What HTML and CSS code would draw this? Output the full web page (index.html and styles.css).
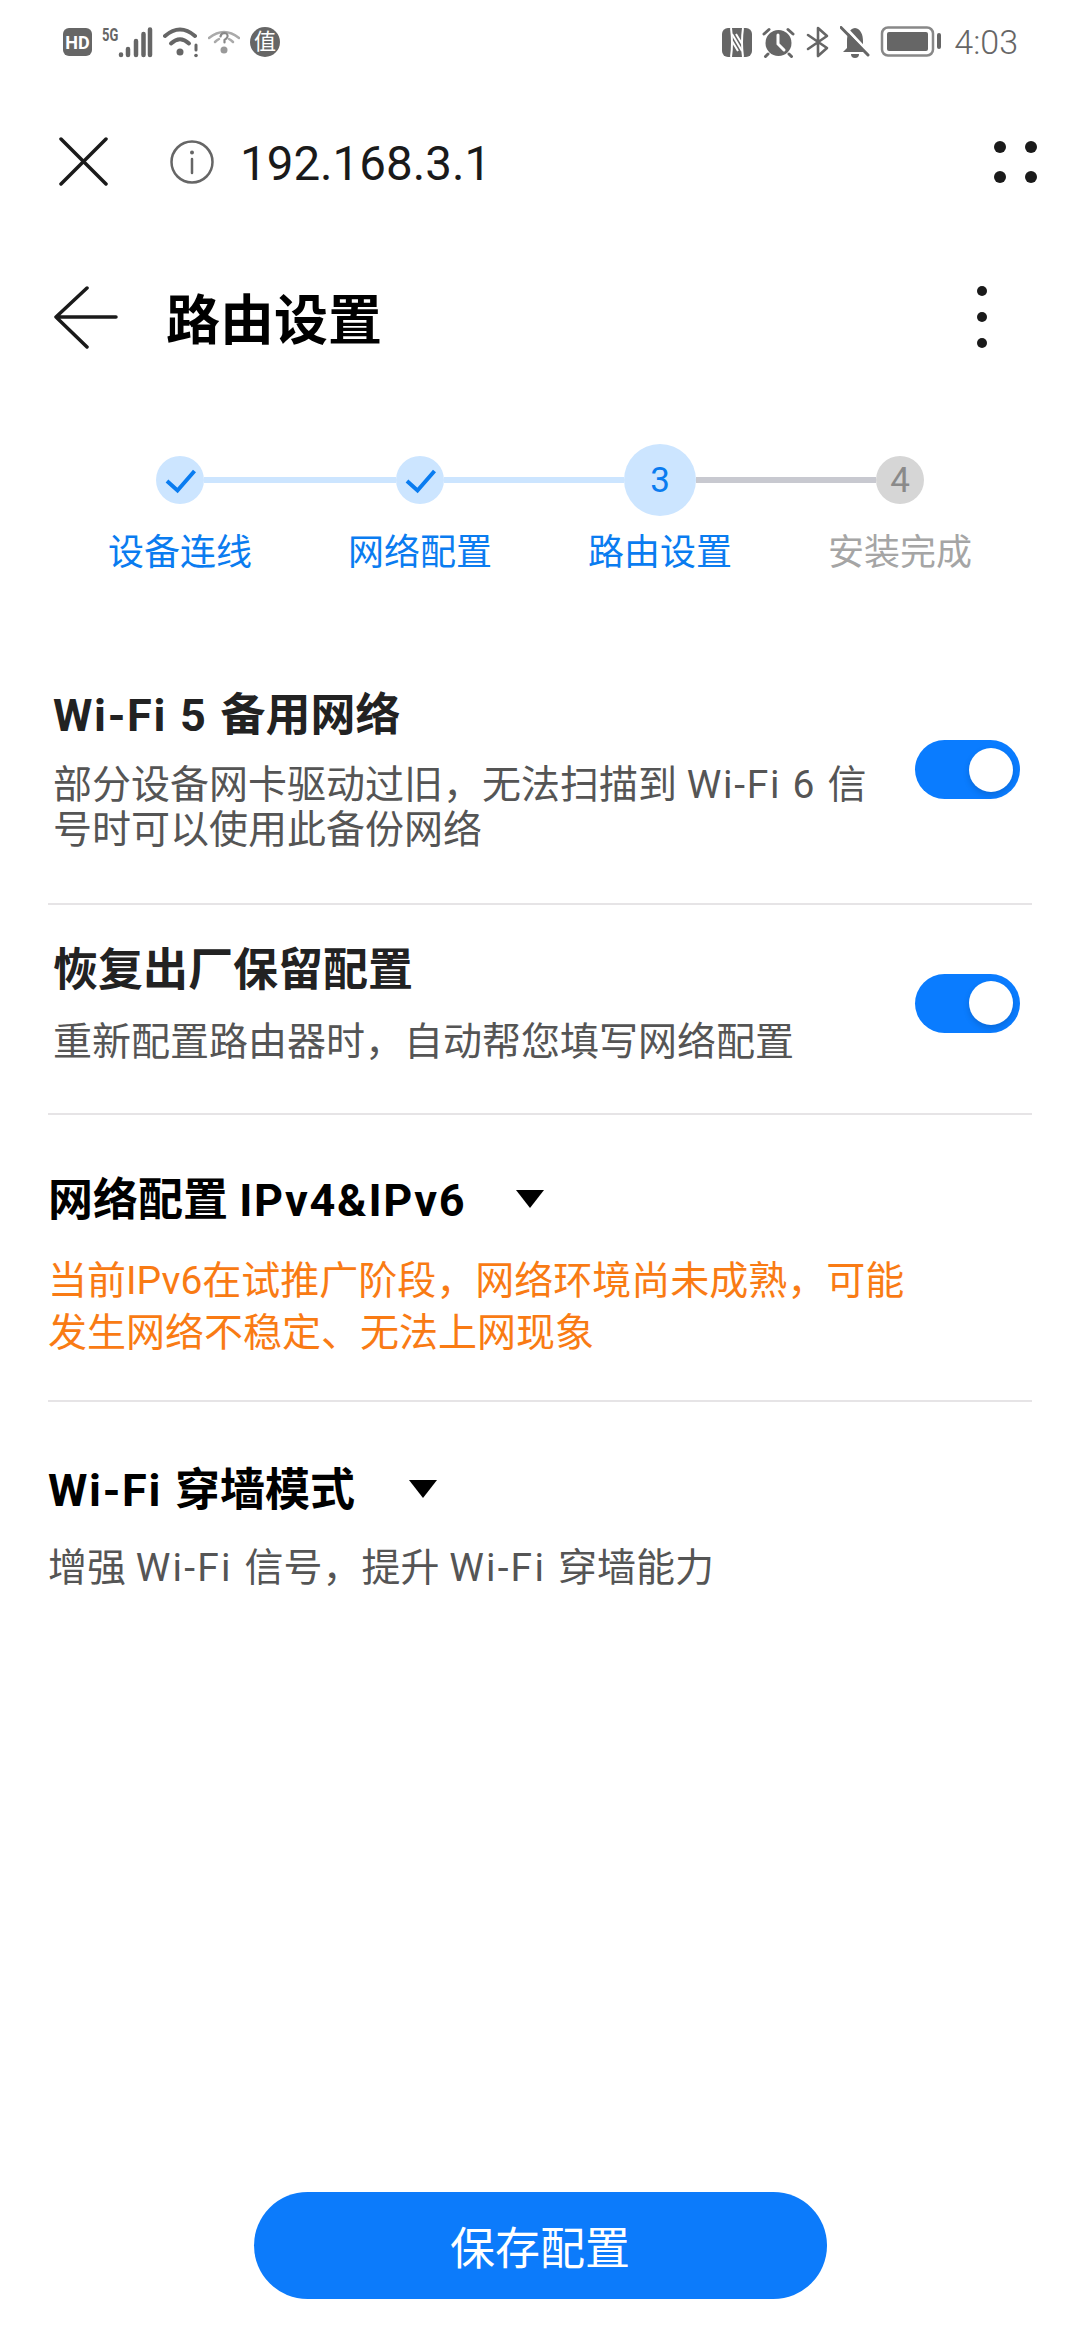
FILE: index.html
```html
<!DOCTYPE html>
<html lang="zh-CN">
<head>
    <meta charset="UTF-8">
    <meta name="viewport" content="width=device-width, initial-scale=1.0">
    <title>路由设置</title>
    <link rel="stylesheet" href="styles.css">
</head>
<body>
    <div class="status-bar">
        <div class="status-group">
            <span class="badge-hd">HD</span>
            <div class="signal">
                <span class="signal-label">5G</span>
                <svg width="35" height="31" viewBox="0 0 35 31" fill="none" stroke="#666" stroke-width="4.5" stroke-linecap="round">
                    <path d="M3 27.5V28M10 22V28M18 14V28M25.5 7V28M32 2.5V28"/>
                </svg>
            </div>
            <svg width="35" height="32" viewBox="0 0 35 32" fill="none" stroke="#666" stroke-linecap="round">
                <path d="M2 10Q17 -3 32 10" stroke-width="4"/>
                <path d="M8 17.5Q17 9 26 17.5" stroke-width="4"/>
                <circle cx="17" cy="26" r="3.5" fill="#666" stroke="none"/>
                <path d="M33 19V24" stroke-width="3"/>
                <circle cx="33" cy="29.5" r="1.8" fill="#666" stroke="none"/>
            </svg>
            <svg width="32" height="32" viewBox="0 0 32 32" fill="none" stroke="#aaa" stroke-linecap="round">
                <path d="M1 12Q16 0 31 12" stroke-width="2.5"/>
                <path d="M7 16Q9 14 11 13M21 13Q23 14 25 16" stroke-width="2.5"/>
                <path d="M12.5 10.5Q13 7 16.5 7Q20 7.5 19.5 10.5Q19 12.5 16.5 14V16.5" stroke="#888" stroke-width="2.2"/>
                <circle cx="16" cy="24" r="3.5" fill="#999" stroke="none"/>
            </svg>
            <span class="badge-zhi">值</span>
        </div>
        <div class="status-group">
            <svg width="30" height="29" viewBox="0 0 30 29" fill="none" stroke="#fff" stroke-width="2">
                <rect width="30" height="29" rx="6" fill="#666" stroke="none"/>
                <path d="M9 29Q11 15 9 0M21 29Q19 14 21 0"/>
                <path d="M10 6L20 23"/>
                <path d="M10 13L16 23M14 6L20 16"/>
            </svg>
            <svg width="33" height="31" viewBox="0 0 33 31" fill="none" stroke="#666" stroke-linecap="round">
                <circle cx="16.5" cy="16" r="13" fill="#666" stroke="none"/>
                <path d="M16 8V17L22 23" stroke="#fff" stroke-width="3"/>
                <path d="M2 7L7 2.5M31 7L26 2.5M6 27L3.5 29.5M27 27L29.5 29.5" stroke-width="3"/>
            </svg>
            <svg width="25" height="32" viewBox="0 0 25 32" fill="none" stroke="#666" stroke-width="2.6" stroke-linejoin="round" stroke-linecap="round">
                <path d="M3 9L22 22L13 30V2L22 10L3 23"/>
            </svg>
            <svg width="30" height="32" viewBox="0 0 30 32">
                <path d="M15 2C9 3 7 9 7 15V22L3 26H27L23 22V15C23 9 21 3 15 2Z" fill="#666"/>
                <path d="M11 28H19A4 4 0 0 1 11 28Z" fill="#666"/>
                <path d="M4 0L32 30" stroke="#fff" stroke-width="3"/>
                <path d="M1 1.5L28 29" stroke="#666" stroke-width="3" stroke-linecap="round"/>
            </svg>
            <svg width="61" height="32" viewBox="0 0 61 32">
                <rect x="2" y="1.5" width="51" height="28" rx="6" fill="none" stroke="#888" stroke-width="2.5"/>
                <rect x="7" y="6" width="41" height="19" rx="2" fill="#666"/>
                <rect x="57" y="7" width="4" height="16" rx="2" fill="#666"/>
            </svg>
            <span class="clock">4:03</span>
        </div>
    </div>

    <div class="url-bar">
        <svg class="url-close" width="50" height="50" viewBox="0 0 50 50" fill="none" stroke="#1a1a1a" stroke-width="3.5" stroke-linecap="round">
            <path d="M3 2L48 47M48 2L3 47"/>
        </svg>
        <svg class="url-info" width="44" height="44" viewBox="0 0 44 44" fill="none" stroke="#666">
            <circle cx="22" cy="22" r="20.5" stroke-width="2.5"/>
            <path d="M22 19V33" stroke-width="2.5" stroke-linecap="round"/>
            <circle cx="22" cy="12.5" r="2" fill="#666" stroke="none"/>
        </svg>
        <span class="url-text">192.168.3.1</span>
        <svg class="push-right" width="44" height="42" viewBox="0 0 44 42" fill="#1a1a1a">
            <circle cx="6" cy="6" r="6"/>
            <circle cx="37" cy="6" r="6"/>
            <circle cx="6" cy="36" r="6"/>
            <circle cx="37" cy="36" r="6"/>
        </svg>
    </div>

    <div class="title-bar">
        <svg class="back" width="64" height="64" viewBox="0 0 64 64" fill="none" stroke="#1a1a1a" stroke-width="3.5" stroke-linecap="round" stroke-linejoin="round">
            <path d="M33 2L2 31L33 61M2 31H62"/>
        </svg>
        <h1 class="page-title">路由设置</h1>
        <svg class="push-right" width="20" height="64" viewBox="0 0 20 64" fill="#1a1a1a">
            <circle cx="10" cy="5" r="5"/>
            <circle cx="10" cy="31" r="5"/>
            <circle cx="10" cy="57" r="5"/>
        </svg>
    </div>

    <div class="stepper">
        <div class="step-dot">
            <svg width="48" height="48" viewBox="0 0 48 48" fill="none" stroke="#0a7cf0" stroke-width="4">
                <path d="M11 25L21.5 34.5L38.5 15"/>
            </svg>
        </div>
        <div class="step-line long"></div>
        <div class="step-dot">
            <svg width="48" height="48" viewBox="0 0 48 48" fill="none" stroke="#0a7cf0" stroke-width="4">
                <path d="M11 25L21.5 34.5L38.5 15"/>
            </svg>
        </div>
        <div class="step-line"></div>
        <div class="step-dot current">3</div>
        <div class="step-line todo"></div>
        <div class="step-dot todo">4</div>
    </div>
    <div class="step-labels">
        <span>设备连线</span>
        <span>网络配置</span>
        <span>路由设置</span>
        <span class="todo">安装完成</span>
    </div>

    <div class="settings">
        <div class="row row-first">
            <div class="row-text">
                <div class="row-title dark"><span><span class="latin">Wi-Fi 5 </span>备用网络</span></div>
                <div class="row-desc">部分设备网卡驱动过旧，无法扫描到 <span class="latin">Wi-Fi 6 </span>信<br>号时可以使用此备份网络</div>
            </div>
            <div class="toggle"><span class="knob"></span></div>
        </div>
        <div class="row row-second">
            <div class="row-text">
                <div class="row-title dark">恢复出厂保留配置</div>
                <div class="row-desc">重新配置路由器时，自动帮您填写网络配置</div>
            </div>
            <div class="toggle"><span class="knob"></span></div>
        </div>
        <div class="block block-ip">
            <div class="row-title"><span>网络配置 <span class="latin">IPv4&amp;IPv6</span></span><span class="caret"></span></div>
            <div class="warn">当前IPv6在试推广阶段，网络环境尚未成熟，可能<br>发生网络不稳定、无法上网现象</div>
        </div>
        <div class="block block-wall">
            <div class="row-title"><span><span class="latin">Wi-Fi </span>穿墙模式</span><span class="caret"></span></div>
            <div class="row-desc">增强 <span class="latin">Wi-Fi </span>信号，提升 <span class="latin">Wi-Fi </span>穿墙能力</div>
        </div>
    </div>

    <div class="footer">
        <button class="save" type="button">保存配置</button>
    </div>
</body>
</html>
```

FILE: styles.css
```css
body {
    margin: 0;
    width: 1080px;
    height: 2340px;
    background: #fff;
    font-family: Roboto, "Noto Sans CJK SC", sans-serif;
    color: #1a1a1a;
    display: flex;
    flex-direction: column;
    overflow: hidden;
}
svg {
    display: block;
    flex: none;
}
.push-right {
    margin-left: auto;
}
.latin {
    letter-spacing: 1.7px;
    white-space: pre;
}

/* status bar */
.status-bar {
    height: 84px;
    padding: 0 62px 0 63px;
    box-sizing: border-box;
    display: flex;
    justify-content: space-between;
    align-items: center;
}
.status-group {
    display: flex;
    align-items: center;
    gap: 10px;
}
.badge-hd {
    width: 29px;
    height: 28px;
    border-radius: 6px;
    background: #666;
    color: #fff;
    font-size: 18px;
    font-weight: 700;
    display: flex;
    justify-content: center;
    align-items: center;
}
.signal {
    display: flex;
    align-items: flex-end;
}
.signal-label {
    width: 16px;
    height: 31px;
    font-size: 18px;
    font-weight: 700;
    line-height: 16px;
    color: #666;
    transform: scaleX(0.72);
    transform-origin: left top;
}
.badge-zhi {
    width: 30px;
    height: 30px;
    border-radius: 50%;
    background: #666;
    color: #fff;
    font-size: 22px;
    line-height: 30px;
    text-align: center;
}
.clock {
    font-size: 34px;
    font-weight: 300;
    color: #666;
    width: 67px;
    text-align: right;
}

/* browser url bar */
.url-bar {
    height: 156px;
    padding: 0 42px 0 58px;
    box-sizing: border-box;
    display: flex;
    align-items: center;
}
.url-close {
    margin-right: 62px;
}
.url-info {
    margin-right: 26px;
}
.url-text {
    font-size: 47.5px;
    margin-top: 4px;
}

/* page title */
.title-bar {
    height: 156px;
    padding: 0 88px 0 54px;
    box-sizing: border-box;
    display: flex;
    align-items: center;
}
.back {
    margin-right: 48px;
}
.page-title {
    margin: 0 0 4px;
    font-size: 54px;
    font-weight: 700;
    color: #000;
}

/* stepper */
.stepper {
    margin-top: 48px;
    height: 72px;
    padding: 0 156px;
    display: flex;
    align-items: center;
}
.step-dot {
    width: 48px;
    height: 48px;
    border-radius: 50%;
    background: #cce5ff;
    color: #0a7cf0;
    font-size: 35px;
    display: flex;
    justify-content: center;
    align-items: center;
    flex: none;
}
.step-dot.current {
    width: 72px;
    height: 72px;
}
.step-dot.todo {
    background: #d6d6d6;
    color: #8a8a8a;
}
.step-line {
    width: 180px;
    height: 6px;
    background: #cce5ff;
    flex: none;
}
.step-line.long {
    width: 192px;
}
.step-line.todo {
    background: #c8c9d0;
}
.step-labels {
    margin-top: 17px;
    padding: 0 60px;
    display: grid;
    grid-template-columns: repeat(4, 240px);
    font-size: 36px;
    line-height: 40px;
    text-align: center;
    color: #0a7cf0;
}
.step-labels .todo {
    color: #a5a5a5;
}

/* settings list */
.settings {
    padding: 0 48px;
}
.row {
    padding-left: 5px;
    padding-right: 12px;
    display: flex;
    justify-content: space-between;
    align-items: center;
    border-bottom: 2px solid #e6e4e6;
}
.row-first {
    padding-top: 113px;
    padding-bottom: 50px;
}
.row-second {
    padding-top: 36px;
    padding-bottom: 48px;
}
.block-ip {
    padding-top: 56px;
    padding-bottom: 41px;
    border-bottom: 2px solid #e6e4e6;
}
.block-wall {
    padding-top: 59px;
}
.row-title {
    font-size: 45px;
    font-weight: 700;
    line-height: 60px;
    color: #000;
    display: flex;
    align-items: center;
}
.row-title.dark {
    color: #222;
}
.row-desc {
    margin-top: 17px;
    font-size: 39px;
    line-height: 45px;
    color: #555;
}
.row-second .row-desc {
    margin-top: 19px;
}
.block-wall .row-desc {
    margin-top: 25px;
}
.block-wall .row-desc .latin {
    letter-spacing: 2.2px;
}
.warn {
    margin-top: 24px;
    font-size: 39px;
    line-height: 52px;
    color: #f97b14;
}
.caret {
    margin-left: 50px;
    margin-bottom: 4px;
    border-left: 14px solid transparent;
    border-right: 14px solid transparent;
    border-top: 18px solid #000;
}
.block-wall .caret {
    margin-left: 54px;
}
.toggle {
    width: 105px;
    height: 59px;
    border-radius: 30px;
    background: #0a7cff;
    padding-right: 7px;
    box-sizing: border-box;
    display: flex;
    justify-content: flex-end;
    align-items: center;
}
.knob {
    width: 44px;
    height: 44px;
    border-radius: 50%;
    background: #fff;
    box-shadow: 0 3px 6px rgba(0, 0, 0, 0.15);
}

/* bottom button */
.footer {
    margin-top: auto;
    padding-bottom: 41px;
    display: flex;
    justify-content: center;
}
.save {
    width: 573px;
    height: 107px;
    border: none;
    border-radius: 54px;
    background: #0c7bfb;
    color: #fff;
    font-family: inherit;
    font-size: 45px;
}
```
